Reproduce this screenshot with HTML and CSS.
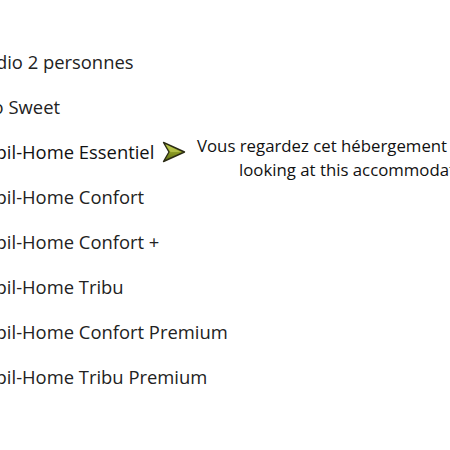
FILE: index.html
```html
<!DOCTYPE html>
<html lang="fr">
<head>
    <meta charset="UTF-8">
    <meta name="viewport" content="width=device-width, initial-scale=1.0">
    <title>Hébergements</title>
    <link rel="stylesheet" href="styles.css">
</head>
<body>
    <ul class="rental-list">
        <li class="rental-item">Studio 2 personnes</li>
        <li class="rental-item">Duo Sweet</li>
        <li class="rental-item current">
            <span>Mobil-Home Essentiel</span>
            <svg class="current-arrow" width="24" height="22" viewBox="0 0 24 22">
                <defs>
                    <linearGradient id="arrowFill" x1="0" y1="0" x2="0" y2="1">
                        <stop offset="0" stop-color="#b3c13f"/>
                        <stop offset="0.5" stop-color="#8c9c25"/>
                        <stop offset="1" stop-color="#5d6b10"/>
                    </linearGradient>
                </defs>
                <polygon points="1.5,1.5 22.5,11 1.5,20.5 7,11" fill="url(#arrowFill)" stroke="#2b2b14" stroke-width="1.4" stroke-linejoin="round"/>
                <polygon points="4,3.5 19,11 8.5,11" fill="#c6d25a" opacity="0.6"/>
            </svg>
            <span class="current-note">Vous regardez cet hébergement / You are looking at this accommodation</span>
        </li>
        <li class="rental-item">Mobil-Home Confort</li>
        <li class="rental-item">Mobil-Home Confort +</li>
        <li class="rental-item">Mobil-Home Tribu</li>
        <li class="rental-item">Mobil-Home Confort Premium</li>
        <li class="rental-item">Mobil-Home Tribu Premium</li>
    </ul>
</body>
</html>
```

FILE: styles.css
```css
body {
    font-family: 'Open Sans', sans-serif;
    margin: 0;
    padding: 0;
    background-color: #ffffff;
    color: #222222;
    overflow: hidden;
}
.rental-list {
    list-style: none;
    margin: 0 0 0 -32px;
    padding: 39px 0 0 0;
    width: 600px;
}
.rental-item {
    display: flex;
    align-items: center;
    height: 45px;
    font-size: 18.4px;
    white-space: nowrap;
}
.current {
    color: #111111;
}
.current-arrow {
    flex: none;
    margin-left: 8px;
}
.current-note {
    width: 330px;
    margin-left: 8px;
    margin-top: 12px;
    font-size: 16.8px;
    line-height: 24px;
    text-align: center;
    white-space: normal;
}
```
